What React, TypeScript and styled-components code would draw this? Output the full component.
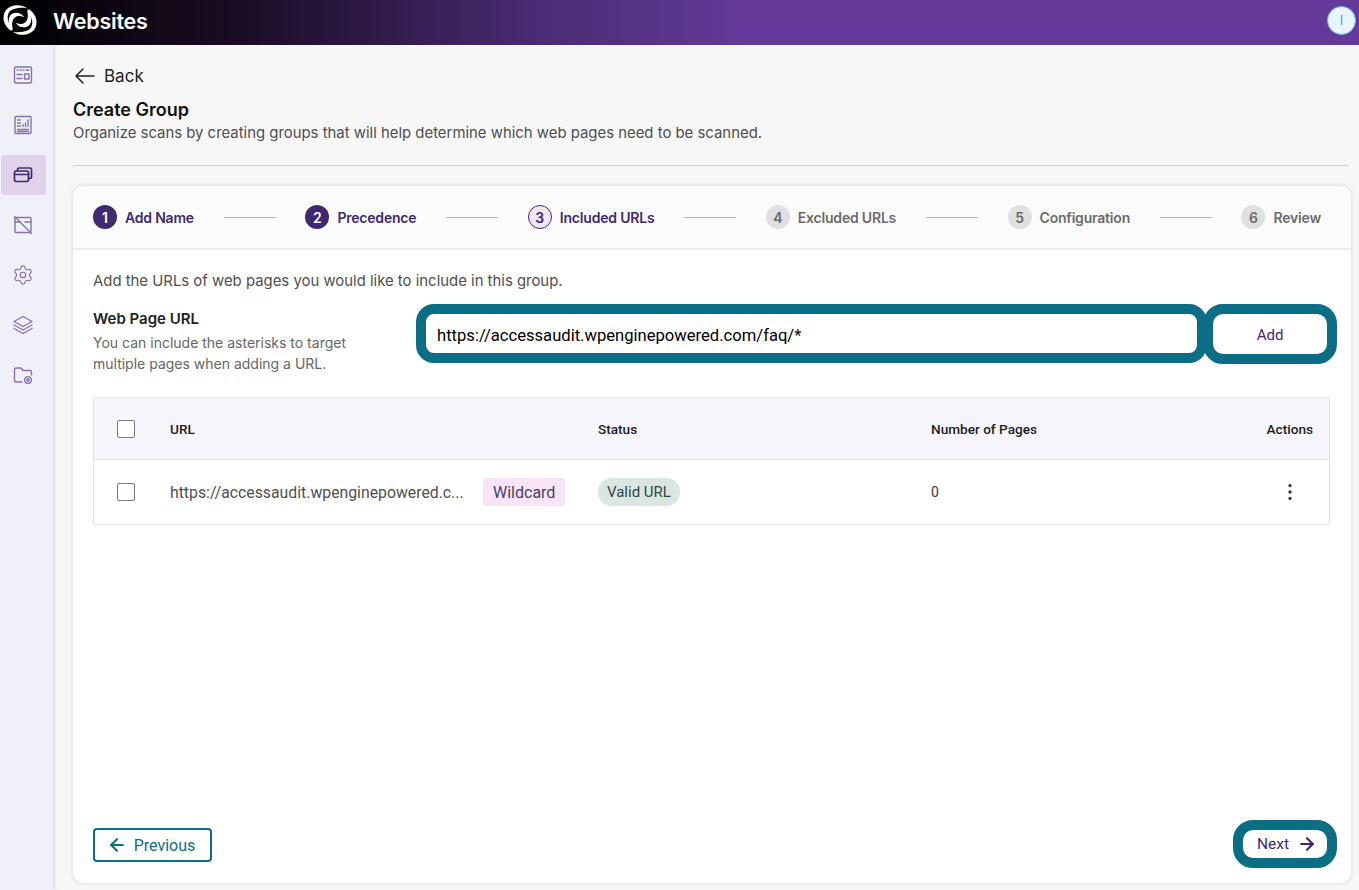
import { Fragment } from "react"
import type { ReactNode } from "react"
import styled, { createGlobalStyle } from "styled-components"
import { ArrowLeft, ArrowRight, MoreVertical, Settings } from "lucide-react"

const GlobalStyle = createGlobalStyle`
  * { box-sizing: border-box; }
  html, body { margin: 0; padding: 0; height: 100%; }
  body {
    font-family: Inter, "Liberation Sans", sans-serif;
    background: #f7f7f7;
    color: #1b1b1b;
    overflow: hidden;
  }
`

const Page = styled.div`
  display: flex;
  flex-direction: column;
  height: 890px;
`

const TopBar = styled.header`
  height: 45px;
  flex: none;
  display: flex;
  align-items: center;
  padding: 0 3px 0 0;
  background: linear-gradient(90deg, #000 0%, #1b0d25 18%, #4a2c75 40%, #633a99 55%, #633a99 100%);
`

const LogoMark = styled.svg`
  flex: none;
  margin-bottom: 5px;
`

const Brand = styled.h1`
  margin: 0 0 3px 13px;
  font-size: 21.5px;
  font-weight: 600;
  color: #fff;
  letter-spacing: -0.2px;
`

const Avatar = styled.div`
  margin: 0 0 5px auto;
  width: 29px;
  height: 29px;
  border-radius: 50%;
  display: flex;
  align-items: center;
  justify-content: center;
  background: #e9f4fd;
  border: 1px solid #6fb1ea;
  color: #4a9eea;
  font-size: 13px;
  font-weight: 400;
`

const Body = styled.div`
  flex: 1;
  display: flex;
  min-height: 0;
`

const Sidebar = styled.nav`
  width: 53px;
  flex: none;
  display: flex;
  flex-direction: column;
  align-items: flex-start;
  gap: 10px;
  padding: 10px 0 0 1px;
  background: #f0f1f8;
  box-shadow: 1px 0 4px rgba(0, 0, 0, 0.14);
`

const NavItem = styled.div<{ $active?: boolean }>`
  width: 45px;
  height: 40px;
  padding-right: 1px;
  display: flex;
  align-items: center;
  justify-content: center;
  border-radius: 4px;
  background: ${props => (props.$active ? "#ddd3ea" : "transparent")};
  color: ${props => (props.$active ? "#43286f" : "#8672ad")};
`

const Main = styled.main`
  flex: 1;
  min-width: 0;
  display: flex;
  flex-direction: column;
  padding: 18px 8px 7px 20px;
`

const BackLink = styled.div`
  display: flex;
  align-items: center;
  gap: 9px;
  height: 26px;
  padding-left: 2px;
  font-size: 17px;
  color: #222;
`

const Title = styled.h2`
  margin: 9px 0 0;
  font-size: 18px;
  line-height: 24px;
  font-weight: 600;
  color: #111;
`

const Subtitle = styled.p`
  margin: 1px 0 0;
  font-size: 14.9px;
  line-height: 20px;
  color: #4f4f4f;
`

const Rule = styled.hr`
  margin: 22px 0 20px;
  border: 0;
  border-top: 1px solid #d2d2d2;
  width: 1276px;
`

const Card = styled.section`
  flex: 1;
  min-height: 0;
  display: flex;
  flex-direction: column;
  background: #fff;
  border-radius: 10px;
  box-shadow: 0 0 5px rgba(0, 0, 0, 0.14);
  overflow: hidden;
`

const Stepper = styled.ol`
  margin: 0;
  height: 64px;
  flex: none;
  display: flex;
  align-items: center;
  justify-content: space-between;
  padding: 0 30px 0 20px;
  list-style: none;
  background: #fbfbfb;
  border-bottom: 2px solid #eeeeee;
`

const Step = styled.li`
  display: flex;
  align-items: center;
  gap: 8px;
`

type StepState = "done" | "current" | "todo"

const StepNumber = styled.span<{ $state: StepState }>`
  width: 24px;
  height: 24px;
  border-radius: 50%;
  display: flex;
  align-items: center;
  justify-content: center;
  font-size: 14px;
  font-weight: 600;
  background: ${props =>
    props.$state === "done" ? "#3f2a70" : props.$state === "current" ? "#ede8f4" : "#e0e0e0"};
  color: ${props =>
    props.$state === "done" ? "#fff" : props.$state === "current" ? "#3f2a70" : "#6b6b6b"};
  border: ${props => (props.$state === "current" ? "1px solid #3f2a70" : "0")};
`

const StepLabel = styled.span<{ $state: StepState }>`
  font-size: 14px;
  font-weight: 600;
  letter-spacing: -0.2px;
  color: ${props => (props.$state === "todo" ? "#6c6c6c" : "#3f2a70")};
`

const StepLine = styled.span`
  width: 52px;
  height: 1px;
  background: #b5b5b5;
`

const Content = styled.div`
  flex: 1;
  min-height: 0;
  display: flex;
  flex-direction: column;
  padding: 21px 21px 15px 20px;
`

const Lead = styled.p`
  margin: 0;
  font-size: 14.9px;
  line-height: 20px;
  color: #4f4f4f;
`

const FormRow = styled.div`
  display: flex;
  align-items: flex-start;
  margin: 13px -7px 0 0;
  height: 60px;
`

const FieldHelp = styled.div`
  width: 323px;
  flex: none;
  padding-top: 5px;
`

const FieldLabel = styled.div`
  font-size: 15px;
  line-height: 20px;
  font-weight: 600;
  color: #222;
`

const FieldHint = styled.div`
  margin-top: 3px;
  font-size: 14px;
  line-height: 21px;
  color: #666;
`

const UrlInput = styled.input`
  width: 791px;
  height: 59px;
  flex: none;
  padding: 3px 11px 0;
  border: 10px solid #0c6e85;
  border-radius: 18px;
  outline: 0;
  background: #fff;
  font-family: Roboto, sans-serif;
  font-size: 16.6px;
  color: #000;
`

const AddButton = styled.button`
  width: 134px;
  height: 60px;
  margin-left: -4px;
  padding: 1px 0 0;
  flex: none;
  border: 10px solid #0c6e85;
  border-radius: 20px;
  background: #fff;
  font-family: Roboto, sans-serif;
  font-size: 15px;
  color: #3f2a70;
`

const Table = styled.div`
  margin-top: 33px;
  border: 1px solid #e1e1e1;
  border-radius: 2px 2px 0 0;
`

const TableRow = styled.div<{ $head?: boolean }>`
  display: grid;
  grid-template-columns: 76px 428px 333px 1fr 80px;
  align-items: center;
  height: ${props => (props.$head ? "62px" : "64px")};
  background: ${props => (props.$head ? "#f5f5fb" : "#fff")};
  border-bottom: ${props => (props.$head ? "1px solid #e1e1e1" : "0")};
  font-family: Roboto, sans-serif;
`

const CheckCell = styled.div`
  padding-left: 23px;
  display: flex;
`

const Checkbox = styled.span`
  width: 18px;
  height: 18px;
  border: 1.5px solid #7b7b7b;
  border-radius: 2px;
  background: #fff;
`

const HeadCell = styled.div<{ $right?: boolean }>`
  font-size: 13.6px;
  font-weight: 500;
  color: #1e1e1e;
  white-space: nowrap;
  text-align: ${props => (props.$right ? "right" : "left")};
  padding-right: ${props => (props.$right ? "16px" : "0")};
`

const UrlCell = styled.div`
  display: flex;
  align-items: center;
  gap: 20px;
`

const UrlText = styled.span`
  width: 293px;
  font-size: 15.8px;
  color: #4f4f4f;
  white-space: nowrap;
`

const WildcardTag = styled.span`
  display: inline-flex;
  align-items: center;
  height: 28px;
  padding: 0 10px;
  border-radius: 3px;
  background: #f8e4f6;
  font-size: 16px;
  color: #45455f;
`

const StatusPill = styled.span`
  display: inline-flex;
  align-items: center;
  height: 28px;
  padding: 0 9px;
  border-radius: 14px;
  background: #dae6e0;
  font-size: 15px;
  color: #33474a;
`

const CountCell = styled.div`
  font-size: 14px;
  color: #3a3a3a;
`

const ActionCell = styled.div`
  display: flex;
  justify-content: flex-end;
  padding-right: 28px;
  color: #333;
`

const Footer = styled.div`
  margin: auto -7px 0 0;
  display: flex;
  align-items: center;
  justify-content: space-between;
`

const PrevButton = styled.button`
  width: 119px;
  height: 34px;
  margin-top: 2px;
  padding: 0 3px 0 0;
  display: flex;
  align-items: center;
  justify-content: center;
  gap: 7px;
  border: 2px solid #0c6e85;
  border-radius: 4px;
  background: #fff;
  font-family: Roboto, sans-serif;
  font-size: 16px;
  color: #0c6e85;
`

const NextButton = styled.button`
  width: 104px;
  height: 48px;
  padding: 0 0 0 4px;
  display: flex;
  align-items: center;
  justify-content: center;
  gap: 8px;
  border: 10px solid #0c6e85;
  border-radius: 20px;
  background: #fff;
  font-family: Roboto, sans-serif;
  font-size: 15.5px;
  color: #3f2a70;
`

function Icon({ children }: { children: ReactNode }) {
  return (
    <svg width="22" height="22" viewBox="0 0 22 22" fill="none" stroke="currentColor" strokeWidth="1.4" strokeLinecap="round" strokeLinejoin="round">
      {children}
    </svg>
  )
}

const navIcons = [
  <Icon>
    <rect x="2.5" y="3" width="17" height="16" rx="1.5" />
    <path d="M5 6h1M8 6h1M11 6h1M14 6h3M5 10.5h5M5 14.5h5" />
    <rect x="12.5" y="10" width="4.5" height="5" />
  </Icon>,
  <Icon>
    <rect x="3" y="2.5" width="16" height="17" rx="1" />
    <path d="M5.5 6h3M5.5 9h3M5.5 12h3M5.5 15.5h11M5.5 17.5h11M11 12.5v-2M13.5 12.5V9M16 12.5V6" />
  </Icon>,
  <Icon>
    <rect x="2.5" y="7" width="14" height="10.5" rx="1.5" strokeWidth="1.7" />
    <path d="M5.5 7V5.5A1.5 1.5 0 0 1 7 4h11a1.5 1.5 0 0 1 1.5 1.5V13a1.5 1.5 0 0 1-1.5 1.5h-1.5M2.5 10.5h14" strokeWidth="1.7" />
  </Icon>,
  <Icon>
    <rect x="3" y="3.5" width="16" height="15" rx="1" />
    <path d="M3 8h6M13 8h6M2.5 2.5l17 17" />
  </Icon>,
  <Settings size={22} strokeWidth={1.3} />,
  <Icon>
    <path d="M11 2.5l9 5-9 5-9-5zM2 11l9 5 9-5M2 14.5l9 5 9-5" />
  </Icon>,
  <Icon>
    <path d="M10 18H4a1.5 1.5 0 0 1-1.5-1.5v-11A1.5 1.5 0 0 1 4 4h5l2 2.5h7A1.5 1.5 0 0 1 19.5 8v3" />
    <circle cx="16" cy="16" r="1.2" />
    <circle cx="16" cy="16" r="3.4" strokeDasharray="2 .6" />
  </Icon>,
]

const steps: { label: string; state: StepState }[] = [
  { label: "Add Name", state: "done" },
  { label: "Precedence", state: "done" },
  { label: "Included URLs", state: "current" },
  { label: "Excluded URLs", state: "todo" },
  { label: "Configuration", state: "todo" },
  { label: "Review", state: "todo" },
]

const logoArc = "M27 8C20 3.5 10.5 4.5 6 10C1.5 16 3 25 10.5 30.5C12.5 31 13 29.5 12.5 27.5C11.5 23 12.5 18 16.5 16.5C19 15.6 22 16 24.5 17.5C22 13 16.5 11.5 12.5 13.5C9.5 15 8.5 18.5 8.7 23C6.8 17 7.5 12.5 11.5 10C16 7.800 22 7.500 27 8Z"

export default function App() {
  return (
    <Page>
      <GlobalStyle />
      <TopBar>
        <LogoMark width="40" height="40" viewBox="0 0 40 40" fill="#fff">
          <path d={logoArc} />
          <path d={logoArc} transform="rotate(180 20 20)" />
        </LogoMark>
        <Brand>Websites</Brand>
        <Avatar>I</Avatar>
      </TopBar>
      <Body>
        <Sidebar>
          {navIcons.map((icon, i) => (
            <NavItem key={i} $active={i === 2}>
              {icon}
            </NavItem>
          ))}
        </Sidebar>
        <Main>
          <BackLink>
            <svg width="20" height="16" viewBox="0 0 20 16" fill="none" stroke="currentColor" strokeWidth="1.5" strokeLinecap="round" strokeLinejoin="round">
              <path d="M1 8h18M8 1 1 8l7 7" />
            </svg>
            Back
          </BackLink>
          <Title>Create Group</Title>
          <Subtitle>Organize scans by creating groups that will help determine which web pages need to be scanned.</Subtitle>
          <Rule />
          <Card>
            <Stepper>
              {steps.map((step, i) => (
                <Fragment key={step.label}>
                  {i > 0 && <StepLine />}
                  <Step>
                    <StepNumber $state={step.state}>{i + 1}</StepNumber>
                    <StepLabel $state={step.state}>{step.label}</StepLabel>
                  </Step>
                </Fragment>
              ))}
            </Stepper>
            <Content>
              <Lead>Add the URLs of web pages you would like to include in this group.</Lead>
              <FormRow>
                <FieldHelp>
                  <FieldLabel>Web Page URL</FieldLabel>
                  <FieldHint>
                    You can include the asterisks to target
                    <br />
                    multiple pages when adding a URL.
                  </FieldHint>
                </FieldHelp>
                <UrlInput readOnly value="https://accessaudit.wpenginepowered.com/faq/*" />
                <AddButton>Add</AddButton>
              </FormRow>
              <Table>
                <TableRow $head>
                  <CheckCell><Checkbox /></CheckCell>
                  <HeadCell>URL</HeadCell>
                  <HeadCell>Status</HeadCell>
                  <HeadCell>Number of Pages</HeadCell>
                  <HeadCell $right>Actions</HeadCell>
                </TableRow>
                <TableRow>
                  <CheckCell><Checkbox /></CheckCell>
                  <UrlCell>
                    <UrlText>https://accessaudit.wpenginepowered.c...</UrlText>
                    <WildcardTag>Wildcard</WildcardTag>
                  </UrlCell>
                  <div><StatusPill>Valid URL</StatusPill></div>
                  <CountCell>0</CountCell>
                  <ActionCell><MoreVertical size={22} strokeWidth={1.6} /></ActionCell>
                </TableRow>
              </Table>
              <Footer>
                <PrevButton>
                  <ArrowLeft size={20} strokeWidth={2.6} />
                  Previous
                </PrevButton>
                <NextButton>
                  Next
                  <ArrowRight size={20} strokeWidth={2.6} />
                </NextButton>
              </Footer>
            </Content>
          </Card>
        </Main>
      </Body>
    </Page>
  )
}
